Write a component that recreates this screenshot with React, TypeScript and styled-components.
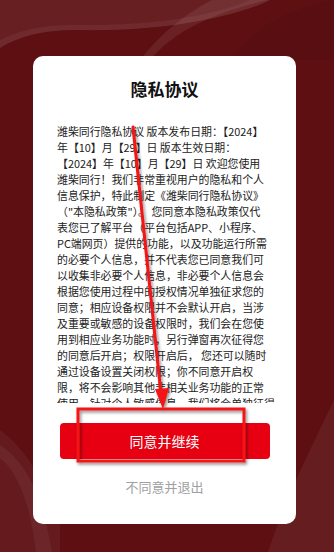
import * as React from 'react';
import styled, { createGlobalStyle } from 'styled-components';

const GlobalStyle = createGlobalStyle`
  html, body {
    margin: 0;
    padding: 0;
    background: #5d0f12;
  }
  * {
    box-sizing: border-box;
  }
`;

const Page = styled.div`
  position: relative;
  width: 334px;
  height: 552px;
  overflow: hidden;
  background: #5d0f12;
  padding: 56px 38px 0 33px;
  font-family: "Noto Sans CJK SC", "Noto Sans", sans-serif;
`;

const Backdrop = styled.svg`
  position: absolute;
  left: 0;
  top: 0;
  width: 334px;
  height: 552px;
`;

const Card = styled.div`
  position: relative;
  width: 263px;
  height: 468px;
  background: #fff;
  border-radius: 10px;
  padding: 21px 0 0;
  display: flex;
  flex-direction: column;
  align-items: center;
`;

const Title = styled.h1`
  margin: 0;
  font-size: 17px;
  line-height: 24px;
  font-weight: 700;
  color: #111;
`;

const Body = styled.div`
  align-self: stretch;
  margin-top: 22px;
  padding: 0 0 0 24px;
  height: 280px;
  overflow: hidden;
  font-size: 10.9px;
  line-height: 16px;
  color: #222;
`;

const Line = styled.div`
  white-space: nowrap;
`;

const AgreeButton = styled.button`
  margin-top: 20px;
  width: 210px;
  height: 36px;
  border: none;
  border-radius: 4px;
  background: #e60012;
  color: #fff;
  font-family: inherit;
  font-size: 14px;
  letter-spacing: 0;
  cursor: pointer;
`;

const Decline = styled.div`
  margin-top: 19px;
  font-size: 13px;
  line-height: 18px;
  color: #a0a0a0;
`;

const Marks = styled.svg`
  position: absolute;
  left: 0;
  top: 0;
  width: 334px;
  height: 552px;
  pointer-events: none;
`;

const lines = [
  '潍柴同行隐私协议 版本发布日期：【2024】',
  '年【10】月【29】日 版本生效日期：',
  '【2024】年【10】月【29】日 欢迎您使用',
  '潍柴同行！我们非常重视用户的隐私和个人',
  '信息保护，特此制定《潍柴同行隐私协议》',
  '（"本隐私政策"）。 您同意本隐私政策仅代',
  '表您已了解平台（平台包括APP、小程序、',
  'PC端网页）提供的功能，以及功能运行所需',
  '的必要个人信息，并不代表您已同意我们可',
  '以收集非必要个人信息，非必要个人信息会',
  '根据您使用过程中的授权情况单独征求您的',
  '同意；相应设备权限并不会默认开启，当涉',
  '及重要或敏感的设备权限时，我们会在您使',
  '用到相应业务功能时，另行弹窗再次征得您',
  '的同意后开启；权限开启后， 您还可以随时',
  '通过设备设置关闭权限；你不同意开启权',
  '限，将不会影响其他非相关业务功能的正常',
  '使用。针对个人敏感信息，我们将会单独征得',
];

export default function App() {
  return (
    <>
      <GlobalStyle />
      <Page>
        <Backdrop viewBox="0 0 334 552">
          <path d="M0 0 H270 C230 20 150 32 80 30 C45 29 18 36 0 48 Z" fill="#ffffff" opacity="0.07" />
          <path d="M0 48 C20 36 45 30 80 30 C150 32 230 20 270 0 H250 C215 16 150 26 80 25 C45 24 20 30 0 40 Z" fill="#ffffff" opacity="0.05" />
          <path d="M150 60 C175 30 215 12 268 0 H212 C185 14 160 34 140 60 Z" fill="#ffffff" opacity="0.08" />
          <path d="M232 60 C250 28 290 8 334 0 V60 Z" fill="#000000" opacity="0.04" />
          <path d="M0 430 C20 445 40 470 60 520 L60 552 H0 Z" fill="#ffffff" opacity="0.05" />
          <path d="M0 445 C22 460 40 485 52 552 H36 C30 500 16 470 0 458 Z" fill="#ffffff" opacity="0.05" />
          <path d="M334 400 C310 450 285 500 268 552 H334 Z" fill="#ffffff" opacity="0.06" />
        </Backdrop>
        <Card>
          <Title>隐私协议</Title>
          <Body>
            {lines.map((text, i) => (
              <Line key={i}>{text}</Line>
            ))}
          </Body>
          <AgreeButton>同意并继续</AgreeButton>
          <Decline>不同意并退出</Decline>
        </Card>
        <Marks viewBox="0 0 334 552">
          <defs>
            <filter id="shade" x="-20%" y="-20%" width="140%" height="140%">
              <feDropShadow dx="1.5" dy="2" stdDeviation="1.5" floodColor="#000" floodOpacity="0.45" />
            </filter>
          </defs>
          <g filter="url(#shade)">
            <line x1="133" y1="127" x2="161" y2="394" stroke="#f31216" strokeWidth="3" strokeLinecap="round" />
            <polygon points="155,389 169,388 163,409" fill="#f31216" />
            <rect x="78" y="409" width="166" height="52" fill="none" stroke="#f31216" strokeWidth="3" />
          </g>
        </Marks>
      </Page>
    </>
  );
}
